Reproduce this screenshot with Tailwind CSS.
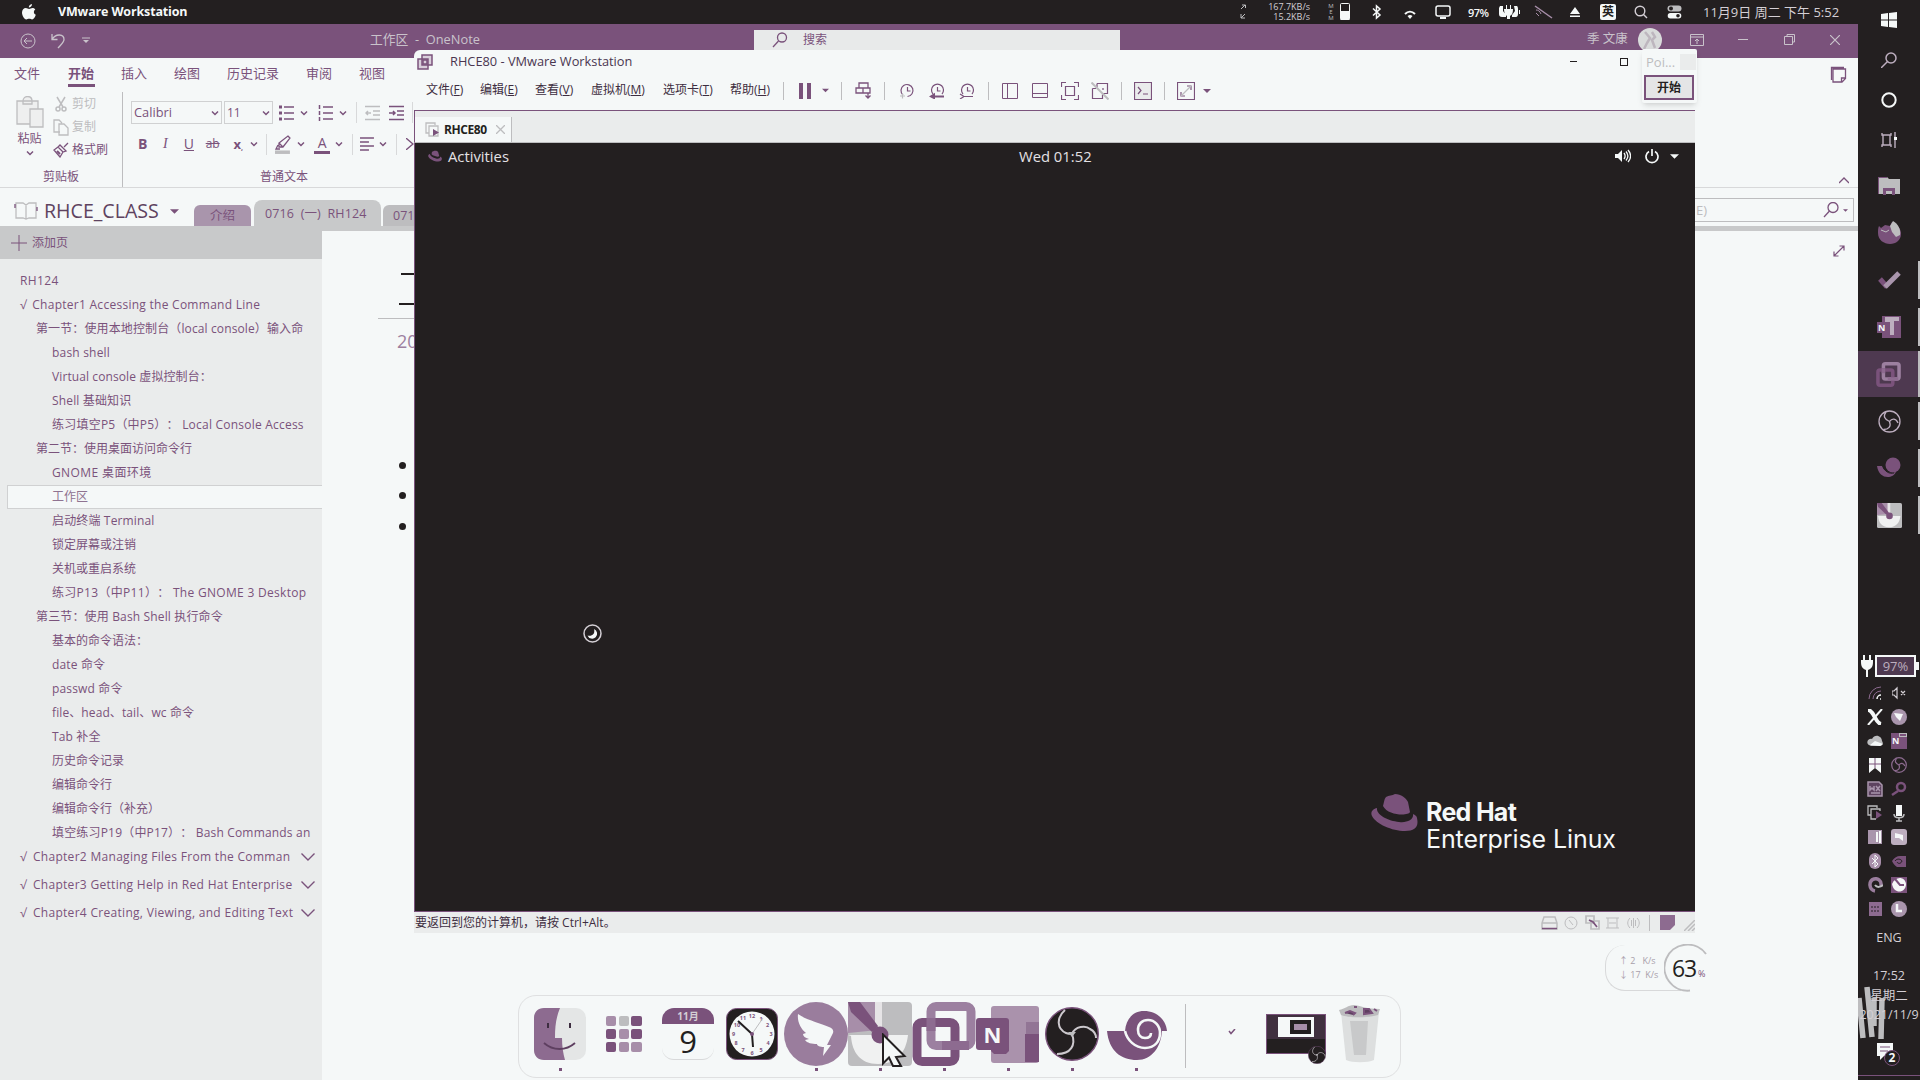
<!DOCTYPE html>
<html lang="zh-CN">
<head>
<meta charset="utf-8">
<title>VMware Workstation</title>
<script src="https://cdn.jsdelivr.net/npm/@tailwindcss/browser@4"></script>
</head>
<body class="flex w-[1920px] h-[1080px] overflow-hidden bg-[#f5f8f8] text-[#7a527b] text-xs leading-none whitespace-nowrap [text-spacing-trim:space-all] font-['Open_Sans','Noto_Sans_CJK_SC',sans-serif]">

<svg class="hidden">
  <symbol id="chev" viewBox="0 0 8 8"><path d="M1 2.500l3 3 3-3" fill="none" stroke="currentColor" stroke-width="1.500"/></symbol>
  <symbol id="caret" viewBox="0 0 8 8"><path d="M0 2h8L4 6z" fill="currentColor"/></symbol>
  <symbol id="obs" viewBox="0 0 54 54"><circle cx="27" cy="27" r="26.300" fill="#231f20" stroke="#7a527b" stroke-width="1.400"/><g fill="none" stroke="#cdc9ce" stroke-width="2"><path d="M20 3c-9 8-8 19 1 23 2 1 4 1 6 1"/><path d="M27 27c3-8 14-9 18-5 4 2 6 5 6 9"/><path d="M27 27c4 11-1 20-15 20"/></g><path d="M23 25h8l-4 5z" fill="#bdbdbf"/></symbol>
  <symbol id="vm" viewBox="0 0 64 64"><rect x="19" y="4.500" width="40" height="39" rx="5" fill="none" stroke="#9c80a0" stroke-width="9"/><rect x="5" y="20.500" width="38" height="39" rx="5" fill="none" stroke="#7a527b" stroke-width="9"/><path d="M19 16v13M30 43.500h27" stroke="#8d6b90" stroke-width="9" fill="none"/></symbol>
  <symbol id="snail" viewBox="0 0 60 50"><path d="M0 20h18c1-12 8-20 19-20 12 0 22 8 23 20h-5c-1 16-10 29-25 29C14 49 2 40 0 20z" fill="#7a527b"/><path d="M18 20c2 9 10 17 20 17 10 0 15-7 15-15 0-7-5-13-12-13-6 0-10 4-10 10 0 5 3 8 7 8 4 0 6-2 6-5" fill="none" stroke="#f5f8f8" stroke-width="2.600"/><path d="M22 20C22 9 29 2 38 2" fill="none" stroke="#7a527b" stroke-width="3"/></symbol>
  <symbol id="pic" viewBox="0 0 64 64"><rect width="64" height="64" rx="4" fill="#bdbdbf"/><path d="M0 0h30v28L0 31z" fill="#a78ea9"/><path d="M27 0h7v28l-7-6z" fill="#e6e4e6"/><path d="M0 33h60c-2 18-12 29-30 29S4 50 3 34z" fill="#f0f1f1"/><path d="M0 0h12l18 24-6 6L3 10z" fill="#7a527b"/><circle cx="32" cy="33" r="8.500" fill="#7a527b"/></symbol>
</svg>

<main class="relative flex w-[1858px] h-full shrink-0 flex-col">

  <!-- system menu bar -->
  <header class="flex h-6 shrink-0 items-center bg-[#231f20] text-[#f5f8f8]">
    <svg class="ml-[22px] h-4 w-[14px]" viewBox="0 0 14 16" fill="currentColor"><path d="M10 0c0 2-1.500 3.500-3.200 3.500C6.700 1.700 8 .4 10 0zM13.300 5.500c-2 1.200-1.900 4.200.5 5.200-.7 2.300-2.200 4.800-3.700 4.800-1.100 0-1.500-.7-2.900-.7s-1.900.7-2.900.7C2.200 15.500 0 11.500 0 8.600 0 5.700 1.800 4 3.800 4c1.300 0 2.300.9 3.300.9S9.200 4 10.600 4c1 0 2 .5 2.700 1.500z"/></svg>
    <b class="ml-[22px] mt-px w-[1180px] text-[12.5px] font-bold tracking-[-0.15px]">VMware Workstation</b>
    <svg class="h-4 w-3 text-[#bdbdbf]" viewBox="0 0 12 16" fill="none" stroke="currentColor"><path d="M3 5l4-4M4 1h3.500v3M7 10l-4 4M3 10v4h4"/></svg>
    <div class="ml-[10px] flex w-[50px] flex-col items-end text-[9px] leading-[10px] text-[#d4cfd5]"><span>167.7KB/s</span><span>15.2KB/s</span></div>
    <div class="ml-[17px] flex w-2 flex-col text-center text-[6px] leading-[6px] text-[#bdbdbf]"><span>M</span><span>E</span><span>M</span></div>
    <svg class="ml-1 h-5 w-3" viewBox="0 0 12 20"><rect x="1.500" y="1.500" width="9" height="16" rx="1" fill="none" stroke="currentColor"/><path d="M1.500 9h9v9h-9z" fill="currentColor"/></svg>
    <svg class="ml-[20px] h-4 w-3" viewBox="0 0 12 16" fill="none" stroke="currentColor" stroke-width="1.500"><path d="M2 4.500l7 6.500-3.500 3V2L9 5l-7 6.500"/></svg>
    <svg class="ml-[19px] h-3 w-4 mt-1" viewBox="0 0 16 12"><path d="M3 6c3-3 7-3 10 0" fill="none" stroke="currentColor" stroke-width="2"/><path d="M5.500 8c2-1.500 3-1.500 5 0L8 11z" fill="currentColor"/></svg>
    <svg class="ml-[17px] h-4 w-4" viewBox="0 0 16 16"><rect x="1" y="2" width="14" height="10" rx="2" fill="none" stroke="currentColor" stroke-width="1.500"/><path d="M5 13h6v2H5z" fill="currentColor"/></svg>
    <span class="ml-[17px] mt-px w-[21px] text-[11px] font-semibold tracking-[-0.6px]">97%</span>
    <svg class="ml-2 h-4 w-6" viewBox="0 0 24 16" fill="currentColor"><path d="M3 2h3v5l3 4v2H5c-2 0-3-1-3-3V4zM9 1h1v4h3V1h1v4h2c0 4-1 6-3 7v3h-3v-3C8 11 7 8 7 5h2zM17 2h3c1 1 1 2 1 4v4c0 2-1 3-2 3h-4v-2l3-4zM22 6h1v4h-1z"/></svg>
    <svg class="ml-[12px] h-4 w-5 text-[#a78ea9]" viewBox="0 0 20 16" fill="none" stroke="currentColor"><path d="M2 2l17 12" stroke-width="1.500"/><path d="M3 6c2 0 4 1 5 4M3 9l3 3"/></svg>
    <svg class="ml-[16px] h-3 w-3" viewBox="0 0 12 12" fill="currentColor"><path d="M6 1l5 7H1zM1 9.500h10V11H1z"/></svg>
    <span class="ml-[19px] flex size-4 items-center justify-center rounded-xs bg-[#f5f8f8] text-xs font-bold text-[#231f20]">英</span>
    <svg class="ml-[18px] size-[14px] text-[#d4cfd5]" viewBox="0 0 14 14" fill="none" stroke="currentColor" stroke-width="1.400"><circle cx="6" cy="6" r="4.800"/><path d="M9.500 9.500L13 13"/></svg>
    <svg class="ml-[19px] h-[14px] w-[15px]" viewBox="0 0 15 14"><rect x=".5" y=".5" width="14" height="6" rx="3" fill="#bdbdbf"/><circle cx="4" cy="3.500" r="2" fill="#231f20"/><rect x=".7" y="8" width="13.600" height="5.500" rx="2.700" fill="#f5f8f8"/><circle cx="11" cy="10.700" r="1.800" fill="#231f20"/></svg>
    <span class="ml-[21px] text-[13px] text-[#d4cfd5]">11月9日 周二 下午 5:52</span>
  </header>

  <!-- OneNote title bar -->
  <div class="flex h-[34px] shrink-0 items-start bg-[#7a527b] text-[#c9c3cb]">
    <svg class="ml-5 mt-[9px] size-4" viewBox="0 0 16 16" fill="none" stroke="currentColor"><circle cx="8" cy="8" r="7"/><path d="M12 8H4m3-3L4 8l3 3"/></svg>
    <svg class="ml-[14px] mt-[9px] h-4 w-4" viewBox="0 0 16 16" fill="none" stroke="currentColor" stroke-width="1.300"><path d="M2 1v5.500h5.500M2 6.500C6 0 14 1 14 6.500c0 3-3 5-6 8.500"/></svg>
    <svg class="ml-4 mt-[13px] size-2" viewBox="0 0 8 8"><path d="M0 1h8" stroke="currentColor"/><path d="M1 3h6L4 6z" fill="currentColor"/></svg>
    <span class="ml-[280px] mt-[7px] w-[384px] text-[12.800px] leading-4">工作区&nbsp; -&nbsp; OneNote</span>
    <div class="mt-[6px] flex h-5 w-[366px] items-center bg-[#e8eaea] text-[#7a527b]">
      <svg class="ml-[18px] size-4" viewBox="0 0 16 16" fill="none" stroke="currentColor" stroke-width="1.300"><circle cx="10" cy="5.500" r="4.500"/><path d="M6.500 9L1 15"/></svg>
      <span class="ml-[15px] text-xs">搜索</span>
    </div>
    <span class="ml-[467px] mt-[7px] w-10 text-[12.5px] leading-4">季 文康</span>
    <svg class="ml-[11px] mt-[4px] size-6" viewBox="0 0 24 24"><circle cx="12" cy="12" r="12" fill="#d9dbdb"/><path d="M7 4l5 6-3 5-3 6M14 4l3 5-3 3 3 8" stroke="#bdb6be" stroke-width="2.500" fill="none"/></svg>
    <svg class="ml-7 mt-[10px] h-3 w-[14px]" viewBox="0 0 14 12" fill="none" stroke="currentColor"><path d="M.5.500h13v11H.5zM.5 3h13M7 10V5M5 7l2-2 2 2"/></svg>
    <svg class="ml-[34px] mt-[10px] h-3 w-[10px]" viewBox="0 0 10 12" stroke="currentColor"><path d="M0 5.500h10"/></svg>
    <svg class="ml-9 mt-[10px] size-[11px]" viewBox="0 0 11 11" fill="none" stroke="currentColor"><path d="M.5 2.500h8v8h-8zM3 2.500v-2h7.500V8h-2"/></svg>
    <svg class="ml-[35px] mt-[11px] size-[10px]" viewBox="0 0 10 10" stroke="currentColor" stroke-width="1.200"><path d="M0 0l10 10M10 0L0 10"/></svg>
  </div>

  <!-- ribbon -->
  <div class="flex h-[130px] shrink-0 flex-col border-b border-[#d8d9da]">
    <nav class="flex h-[34px] items-start pl-[14px] text-[13px] leading-4">
      <span class="w-[54px] pt-[7px]">文件</span>
      <span class="mr-[26px] flex h-[34px] w-[27px] flex-col pt-[7px] font-bold"><span>开始</span><i class="mt-[3px] h-[3px] bg-[#7a527b]"></i></span>
      <span class="w-[53px] pt-[7px]">插入</span><span class="w-[53px] pt-[7px]">绘图</span><span class="w-[79px] pt-[7px]">历史记录</span><span class="w-[53px] pt-[7px]">审阅</span><span class="pt-[7px]">视图</span>
      <svg class="ml-auto mr-[11px] mt-2 size-[18px]" viewBox="0 0 18 18" fill="none" stroke="currentColor" stroke-width="1.300"><path d="M4 3h12.500v9.500L13 16H4zM12.500 16v-4h4M2.500 14V1.500H15"/></svg>
    </nav>
    <div class="flex h-[95px]">
      <div class="flex w-[123px] flex-col border-r border-[#bdbdbf]">
        <div class="flex h-[77px]">
          <div class="flex w-[55px] flex-col items-center pl-1">
            <svg class="mt-[4px] h-8 w-7" viewBox="0 0 28 32" fill="#eeefef" stroke="#bdbdbf" stroke-width="1.300"><path d="M1 5h21v23H1zM7 5c0-6 9-6 9 0v3H7z"/><path d="M14 13h13v18H14z"/></svg>
            <span class="mt-[3px] text-xs">粘贴</span>
            <svg class="mt-[2px] size-2"><use href="#chev"/></svg>
          </div>
          <div class="flex flex-col pt-px text-xs">
            <div class="flex h-[22px] items-center gap-[5px] text-[#bdbdbf]"><svg class="h-4 w-[12px]" viewBox="0 0 12 16" fill="none" stroke="currentColor" stroke-width="1.500"><path d="M2 1l6 10M10 1L4 11"/><circle cx="3" cy="13" r="2"/><circle cx="9" cy="13" r="2"/></svg>剪切</div>
            <div class="flex h-[24px] items-center gap-[3px] text-[#bdbdbf]"><svg class="-ml-[2px] h-[17px] w-[16px]" viewBox="0 0 16 17" fill="none" stroke="currentColor" stroke-width="1.300"><path d="M7 13H1V1h5l3 3M6 5h5l4 4v7H6z"/></svg>复制</div>
            <div class="flex h-[22px] items-center gap-[3px]"><svg class="-ml-[2px] size-4" viewBox="0 0 16 16" fill="none" stroke="currentColor" stroke-width="1.300"><path d="M15 1l-4 4M7 3l6 6-3 1-5-5zM5 5L1 8l6 7 3-5"/><path d="M4 9l3 3" stroke-width="2"/></svg>格式刷</div>
          </div>
        </div>
        <span class="pl-[43px] text-xs">剪贴板</span>
      </div>
      <div class="flex w-[291px] flex-col overflow-hidden">
        <div class="mt-[9px] flex h-[23px] items-center pl-[8px]">
          <div class="flex h-[23px] w-[91px] items-center justify-between border border-[#d0d1d2] px-[2px] text-[12.800px]">Calibri<svg class="size-2"><use href="#chev"/></svg></div>
          <div class="ml-[2px] flex h-[23px] w-[49px] items-center justify-between border border-[#d0d1d2] px-[2px] text-[12px]">11<svg class="size-2"><use href="#chev"/></svg></div>
          <svg class="ml-[6px] size-4" viewBox="0 0 16 16" stroke="currentColor" stroke-width="1.500"><path d="M0 2h3M0 8h3M0 14h3" stroke-width="3"/><path d="M5 2h10M5 8h10M5 14h10"/></svg>
          <svg class="ml-[5px] size-2"><use href="#chev"/></svg>
          <svg class="ml-[10px] size-4" viewBox="0 0 16 16" stroke="currentColor"><path d="M1.500 0v4M1.500 6v4M1.500 12v4" stroke-width="1.500"/><path d="M5 2h10M5 8h10M5 14h10" stroke-width="1.500"/></svg>
          <svg class="ml-[5px] size-2"><use href="#chev"/></svg>
          <i class="ml-[9px] h-[21px] w-px bg-[#d8d9da]"></i>
          <svg class="ml-[8px] size-4 text-[#bdbdbf]" viewBox="0 0 16 16" fill="none" stroke="currentColor" stroke-width="1.500"><path d="M0 1.500h15M8 6h7M8 10h7M0 14.500h15M6 8H1m2-2L1 8l2 2"/></svg>
          <svg class="ml-[8px] size-4" viewBox="0 0 16 16" fill="none" stroke="currentColor" stroke-width="1.500"><path d="M0 1.500h15M8 6h7M8 10h7M0 14.500h15M0 8h6M4 6l2 2-2 2"/></svg>
          <i class="ml-[7px] h-[21px] w-px bg-[#d8d9da]"></i>
        </div>
        <div class="mt-[9px] flex h-[22px] items-center pl-[15px] text-sm">
          <b class="w-6">B</b><i class="w-[22px] pl-[1px] font-['Liberation_Serif']">I</i><u class="w-[22px]">U</u><s class="w-[28px] text-xs">ab</s><span class="w-[17px] font-bold text-[13px]">x<sub class="text-[7px]">,</sub></span>
          <svg class="size-2"><use href="#chev"/></svg>
          <i class="ml-[8px] h-[21px] w-px bg-[#d8d9da]"></i>
          <svg class="ml-[7px] h-[19px] w-[17px]" viewBox="0 0 17 19"><path d="M14 1l2 2-7 9H5v-4zM5 8l4 4M4 10l-2 4h4" fill="none" stroke="currentColor" stroke-width="1.300"/><path d="M1 15.500h15V19H1z" fill="#bdbdbf"/></svg>
          <svg class="ml-[6px] size-2"><use href="#chev"/></svg>
          <span class="ml-[9px] flex h-[19px] w-4 flex-col items-center border-b-[3px] border-[#7a527b] leading-4">A</span>
          <svg class="ml-[5px] size-2"><use href="#chev"/></svg>
          <i class="ml-[9px] h-[21px] w-px bg-[#d8d9da]"></i>
          <svg class="ml-[7px] size-[14px]" viewBox="0 0 14 14" stroke="currentColor" stroke-width="1.400"><path d="M0 1h14M0 5h9M0 9h14M0 13h9"/></svg>
          <svg class="ml-[5px] size-2"><use href="#chev"/></svg>
          <i class="ml-[9px] h-[21px] w-px bg-[#d8d9da]"></i>
          <svg class="ml-[9px] h-3 w-2" viewBox="0 0 8 12" stroke="currentColor" stroke-width="1.300" fill="none"><path d="M0 0l7 6-7 6"/></svg>
        </div>
        <span class="mt-[14px] pl-[137px] text-xs">普通文本</span>
      </div>
      <svg class="ml-auto mr-[9px] mt-[83px] h-[10px] w-[10px]" viewBox="0 0 10 10" fill="none" stroke="currentColor" stroke-width="1.300"><path d="M0 8l5-5 5 5"/></svg>
    </div>
  </div>

  <!-- notebook header -->
  <div class="flex h-[38px] shrink-0">
    <svg class="ml-[14px] mt-[13px] h-[19px] w-6" viewBox="0 0 24 19" fill="none" stroke="#bdbdbf" stroke-width="1.300"><path d="M2 2h7l3 2 3-2h7v15h-7l-3 1-3-1H2zM12 4v14"/><path d="M1 3v4M23 6v4" stroke="#7a527b"/></svg>
    <span class="ml-[6px] mt-[11px] w-[126px] text-[19.600px] leading-6 text-[#5e4360]">RHCE_CLASS</span>
    <svg class="mt-[19px] size-[9px]"><use href="#caret"/></svg>
    <div class="ml-[15px] flex items-end text-[12.500px]">
      <span class="h-[21px] w-[57px] rounded-t-md bg-[#a995ac] pt-[5px] text-center">介绍</span>
      <span class="ml-[3px] h-[26px] w-[127px] rounded-t-lg bg-[#c8c9ca] pl-[11px] pt-[8px] tracking-[0.1px]">0716&nbsp; (一)&nbsp; RH124</span>
      <span class="ml-[2px] h-[21px] w-[80px] rounded-t-md bg-[#bdbdbf] pl-[10px] pt-[5px]">071</span>
    </div>
    <div class="ml-auto mr-1 mt-[10px] flex h-[24px] w-[400px] items-center justify-end border border-[#bdbdbf]">
      <span class="mr-auto pl-[241px] text-[13px] text-[#bdbdbf]">E)</span>
      <svg class="size-4" viewBox="0 0 16 16" fill="none" stroke="currentColor" stroke-width="1.300"><circle cx="10" cy="5.500" r="5"/><path d="M6.500 9L1 15"/></svg>
      <svg class="ml-[4px] mr-[5px] size-[5px]"><use href="#caret"/></svg>
    </div>
  </div>

  <!-- page list and canvas -->
  <div class="flex min-h-0 flex-1">
    <div class="flex w-[322px] shrink-0 flex-col bg-[#eaecec]">
      <div class="flex h-[33px] items-center gap-[5px] bg-[#c8c9ca] pl-[11px]">
        <svg class="size-4" viewBox="0 0 16 16" stroke="currentColor"><path d="M8 0v16M0 8h16"/></svg>添加页
      </div>
      <ul class="mt-[10px] flex flex-col leading-[24px] [&>li]:h-6 [&>li]:shrink-0 [&>li]:overflow-hidden text-[12px]">
        <li class="pl-5 tracking-[0.35px]">RH124</li>
        <li class="pl-5 tracking-[0.27px]">√<span class="ml-[2px]"> Chapter1 Accessing the Command Line</span></li>
        <li class="pl-9 tracking-[0.12px]">第一节：使用本地控制台（local console）输入命</li>
        <li class="pl-[52px] tracking-[0.2px]">bash shell</li>
        <li class="pl-[52px] tracking-[0.1px]">Virtual console 虚拟控制台：</li>
        <li class="pl-[52px] tracking-[0.15px]">Shell 基础知识</li>
        <li class="pl-[52px] tracking-[0.22px]">练习填空P5（中P5）： Local Console Access</li>
        <li class="pl-9">第二节：使用桌面访问命令行</li>
        <li class="pl-[52px] tracking-[0.4px]">GNOME 桌面环境</li>
        <li class="ml-[7px] border border-r-0 border-[#d0d1d2] bg-[#f5f8f8] pl-[44px] leading-[22px] text-[#8f7391]">工作区</li>
        <li class="pl-[52px] tracking-[0.15px]">启动终端 Terminal</li>
        <li class="pl-[52px]">锁定屏幕或注销</li>
        <li class="pl-[52px]">关机或重启系统</li>
        <li class="pl-[52px] tracking-[0.3px]">练习P13（中P11）： The GNOME 3 Desktop</li>
        <li class="pl-9 tracking-[0.15px]">第三节：使用 Bash Shell 执行命令</li>
        <li class="pl-[52px]">基本的命令语法：</li>
        <li class="pl-[52px] tracking-[0.15px]">date 命令</li>
        <li class="pl-[52px] tracking-[0.15px]">passwd 命令</li>
        <li class="pl-[52px] tracking-[0.1px]">file、head、tail、wc 命令</li>
        <li class="pl-[52px] tracking-[0.15px]">Tab 补全</li>
        <li class="pl-[52px]">历史命令记录</li>
        <li class="pl-[52px]">编辑命令行</li>
        <li class="pl-[52px]">编辑命令行（补充）</li>
        <li class="pl-[52px] tracking-[0.18px]">填空练习P19（中P17）： Bash Commands an</li>
      </ul>
      <div class="-mt-[2px] flex flex-col leading-[28px] tracking-[0.3px]">
        <div class="flex h-7 items-center pl-5 pr-[7px]">√<span class="ml-[6px]">Chapter2 Managing Files From the Comman</span><svg class="ml-auto h-2 w-[14px]" viewBox="0 0 14 8" fill="none" stroke="currentColor" stroke-width="1.400"><path d="M.5.500L7 7 13.500.500"/></svg></div>
        <div class="flex h-7 items-center pl-5 pr-[7px]">√<span class="ml-[6px]">Chapter3 Getting Help in Red Hat Enterprise</span><svg class="ml-auto h-2 w-[14px]" viewBox="0 0 14 8" fill="none" stroke="currentColor" stroke-width="1.400"><path d="M.5.500L7 7 13.500.500"/></svg></div>
        <div class="flex h-7 items-center pl-5 pr-[7px]">√<span class="ml-[6px]">Chapter4 Creating, Viewing, and Editing Text</span><svg class="ml-auto h-2 w-[14px]" viewBox="0 0 14 8" fill="none" stroke="currentColor" stroke-width="1.400"><path d="M.5.500L7 7 13.500.500"/></svg></div>
      </div>
    </div>
    <div class="flex flex-1 flex-col border-t-[5px] border-[#c8c9ca]">
      <div class="flex justify-between">
        <div class="flex w-[92px] flex-col pl-14 text-[#231f20]">
          <i class="ml-[23px] mt-[42px] h-[2px] w-[13px] bg-[#231f20]"></i>
          <i class="ml-[21px] mt-[28px] h-[2px] w-[15px] bg-[#231f20]"></i>
          <i class="mt-[13px] h-px w-9 bg-[#bdbdbf]"></i>
          <span class="mt-[12px] pl-[19px] text-[18px] leading-5 text-[#9c80a0]">20</span>
          <i class="ml-[21px] mt-[111px] size-[7px] rounded-full bg-[#231f20]"></i>
          <i class="ml-[21px] mt-[23px] size-[7px] rounded-full bg-[#231f20]"></i>
          <i class="ml-[21px] mt-[24px] size-[7px] rounded-full bg-[#231f20]"></i>
        </div>
        <svg class="mr-[13px] mt-[14px] size-3" viewBox="0 0 12 12" fill="none" stroke="currentColor" stroke-width="1.200"><path d="M1 11L11 1M6.500 1H11v4.500M1 6.500V11h4.500"/></svg>
      </div>
    </div>
  </div>

  <!-- VMware window -->
  <section class="absolute left-[414px] top-[50px] flex h-[883px] w-[1281px] flex-col overflow-hidden rounded-tl-md bg-[#f5f8f8] text-[#231f20]">
    <div class="flex h-[23px] items-center">
      <svg class="ml-[3px] size-4 text-[#7a527b]" viewBox="0 0 16 16" fill="#d9cfdb" stroke="currentColor" stroke-width="1.500"><path d="M5 1h10v10H5zM1 5h10v10H1z"/><path d="M6 6h4v4H6z"/></svg>
      <span class="ml-[17px] text-[12.800px] text-[#4a3650]">RHCE80 - VMware Workstation</span>
      <i class="ml-auto h-[1.500px] w-[7px] bg-[#231f20]"></i>
      <i class="ml-[43px] mr-[67px] size-2 border-[1.500px] border-[#231f20]"></i>
    </div>
    <div class="flex h-[38px] items-center border-b border-[#7a527b] pl-3 pb-[2px] text-[#7a527b]">
      <div class="flex pb-[2px] text-xs text-[#3d2d40]"><span class="w-[54px]">文件(<u>F</u>)</span><span class="w-[55px]">编辑(<u>E</u>)</span><span class="w-[56px]">查看(<u>V</u>)</span><span class="w-[72px]">虚拟机(<u>M</u>)</span><span class="w-[67px]">选项卡(<u>T</u>)</span><span class="w-[53px]">帮助(<u>H</u>)</span></div>
      <i class="h-[18px] w-px bg-[#bdbdbf]"></i>
      <svg class="ml-[15px] h-4 w-3" viewBox="0 0 12 16" fill="currentColor"><path d="M0 0h4v16H0zM8 0h4v16H8z"/></svg>
      <svg class="ml-[11px] size-[7px]"><use href="#caret"/></svg>
      <i class="ml-[12px] h-[18px] w-px bg-[#bdbdbf]"></i>
      <svg class="ml-[13px] h-[17px] w-4" viewBox="0 0 16 17" fill="none" stroke="currentColor" stroke-width="1.300"><path d="M4 1h9v5H4zM1 6h7v5H1zM8 6h7v5H8z"/><path d="M13 11v5m-2.500-2.500L13 16l2.500-2.500"/></svg>
      <i class="ml-[13px] h-[18px] w-px bg-[#bdbdbf]"></i>
      <svg class="ml-[14px] size-4" viewBox="0 0 16 16" fill="none" stroke="currentColor" stroke-width="1.200"><path d="M4 12a6 6 0 1 1 4.500 1.500"/><path d="M8.500 4v4h3"/><path d="M1 13h5M3.500 10.500v5" stroke="#bdbdbf"/></svg>
      <svg class="ml-[14px] size-4" viewBox="0 0 16 16" fill="none" stroke="currentColor" stroke-width="1.200"><path d="M4 11a6 6 0 1 1 9 0"/><path d="M8.500 4v4h3"/><path d="M4 13.500h11M5 11.500l-3 2 3 1.500z" stroke-width="2"/></svg>
      <svg class="ml-[14px] size-4" viewBox="0 0 16 16" fill="none" stroke="currentColor" stroke-width="1.200"><path d="M4 11a6 6 0 1 1 9 0"/><path d="M8.500 4v4h3M1 11l4 2.500L1 16M5 13.500h9"/></svg>
      <i class="ml-[13px] h-[18px] w-px bg-[#bdbdbf]"></i>
      <svg class="ml-[13px] size-4" viewBox="0 0 16 16" fill="none" stroke="currentColor"><path d="M.5.500h15v15H.5zM5.500.500v15"/></svg>
      <svg class="ml-[14px] size-4" viewBox="0 0 16 16" fill="none" stroke="currentColor"><path d="M.5.500h15v14H.5zM.5 10.500h15"/></svg>
      <svg class="ml-[13px] size-[18px]" viewBox="0 0 18 18" fill="none" stroke="currentColor" stroke-width="1.200"><path d="M5 .5H.5V5M13 .5h4.500V5M5 17.500H.5V13M13 17.500h4.500V13M4.500 4.500h9v9h-9z"/></svg>
      <svg class="ml-[12px] size-[18px]" viewBox="0 0 18 18" fill="none" stroke="currentColor" stroke-width="1.200"><path d="M6 1.500h10.500v10H12M6 1.500v4M1.500 6.500H5M1.500 6.500v10h10v-4M12 6v2"/><path d="M.5.500l17 17" stroke="#bdbdbf" stroke-width="2"/></svg>
      <i class="ml-[12px] h-[18px] w-px bg-[#bdbdbf]"></i>
      <svg class="ml-[12px] size-[18px]" viewBox="0 0 18 18" fill="none" stroke="currentColor" stroke-width="1.200"><path fill="#eaecec" d="M.5.500h17v17H.5z"/><path d="M4 5l3 3.500L4 12M9 12h5"/></svg>
      <i class="ml-[12px] h-[18px] w-px bg-[#bdbdbf]"></i>
      <svg class="ml-[12px] size-[18px]" viewBox="0 0 18 18" fill="none" stroke="currentColor" stroke-width="1.200"><path d="M.5.500h17v17H.5zM10 4h4v4M4 10v4h4"/><path d="M4 14L14 4" stroke="#bdbdbf"/></svg>
      <svg class="ml-[8px] size-[8px]"><use href="#caret"/></svg>
    </div>
    <div class="flex h-[32px] border-b border-l border-b-[#bdbdbf] border-l-[#7a527b] bg-[#eaecec] pt-[6px]">
      <div class="flex w-[97px] items-center border-r border-[#bdbdbf] bg-[#f5f8f8] pl-[10px]">
        <svg class="size-[15px]" viewBox="0 0 15 15" fill="none" stroke="#bdbdbf" stroke-width="1.300"><path d="M10 3V1H1v10h3M4 4h9v10H4z"/><path d="M8 7v7l6-3.500z" fill="#7a527b" stroke="none"/></svg>
        <b class="ml-[4px] w-[52px] text-xs tracking-[-0.4px]">RHCE80</b>
        <svg class="size-[9px]" viewBox="0 0 9 9" stroke="#bdbdbf" stroke-width="1.300"><path d="M0 0l9 9M9 0L0 9"/></svg>
      </div>
    </div>
    <!-- guest display -->
    <div class="flex h-[769px] flex-col border-b border-l border-[#7a527b] bg-[#231f20] text-[#e4e1e5]">
      <div class="grid h-[27px] grid-cols-[604px_1fr_auto] items-center pb-px text-[14.800px]">
        <div class="flex items-center pl-[13px]"><svg class="h-3 w-[14px] text-[#7a527b]" viewBox="0 0 47 37" fill="currentColor"><path d="M13 6c4-6 17-7 21-1l4 14c-6 4-20 0-26-6zM6 12c-4 1-6 4-5 8 4 9 20 17 33 17 10 0 14-5 12-13l-5-4c1 6-6 9-14 7C16 24 8 19 6 12z"/></svg><span class="ml-[6px]">Activities</span></div>
        <span>Wed 01:52</span>
        <div class="flex items-center pr-4 text-[#f5f8f8]">
          <svg class="h-[14px] w-4" viewBox="0 0 16 14"><path d="M0 5h3l4-4v12L3 9H0z" fill="currentColor"/><path d="M9 4c1.500 2 1.500 4 0 6M11 2.500c2.500 3 2.500 6 0 9M13 1c3.500 4 3.500 8 0 12" fill="none" stroke="currentColor" stroke-width="1.300"/></svg>
          <svg class="ml-[14px] h-[15px] w-[14px]" viewBox="0 0 14 15" fill="none" stroke="currentColor" stroke-width="1.700"><path d="M4 2.500a6 6 0 1 0 6 0M7 0v7"/></svg>
          <svg class="ml-[11px] size-[9px]"><use href="#caret"/></svg>
        </div>
      </div>
      <svg class="ml-[168px] mt-[454px] size-[19px] shrink-0" viewBox="0 0 19 19" fill="none"><circle cx="9.500" cy="9.500" r="8.500" stroke="#d4cfd5" stroke-width="1.500"/><path d="M11 5a5 5 0 1 1-6.500 6.500c4 1 8-1 6.500-6.500z" fill="#f5f8f8"/></svg>
      <div class="ml-auto mr-[79px] mt-[148px] flex w-[245px] gap-[8px] text-[#f5f8f8]">
        <svg class="mt-[3px] h-[37px] w-[47px] text-[#7a527b]" viewBox="0 0 47 37" fill="currentColor"><path d="M12 12c1-3 1-7 3-9 3-2 6-1 9-3 6 0 11 4 13 8l2 10c-1 4-22 4-27-6zM6 14c-4 1-7 4-5 8 4 8 20 15 33 15 10 0 14-4 12-13 0-2-2-3-4-4 1 6-6 9-14 8C17 27 5 21 6 14z"/></svg>
        <div class="flex flex-col font-['Inter']"><b class="pt-[8px] text-[25px] leading-[27px] tracking-[-0.700px]">Red Hat</b><span class="text-[25px] leading-[26px] tracking-[-0.100px]">Enterprise Linux</span></div>
      </div>
    </div>
    <div class="flex flex-1 items-center bg-[#eaecec] text-[#bdbdbf]">
      <span class="mr-auto pt-px text-[12px] text-[#3d2d40] ml-px">要返回到您的计算机，请按 Ctrl+Alt。</span>
      <svg class="h-[14px] w-[17px]" viewBox="0 0 17 14" fill="none" stroke="currentColor" stroke-width="1.500"><path d="M3 1h11l2 6v6H1V7zM1 7h15"/><path d="M1 12.500h15" stroke="#7a527b"/></svg>
      <svg class="ml-[6px] size-[14px]" viewBox="0 0 14 14" fill="none" stroke="currentColor"><circle cx="7" cy="7" r="6"/><path d="M5 4l4 5"/></svg>
      <svg class="ml-[7px] size-[15px]" viewBox="0 0 15 15" fill="none" stroke="currentColor" stroke-width="1.700"><path d="M1 1h8v7H1zM6 6h8v8H6z"/><path d="M4 5l4 2 4 5" stroke="#7a527b"/></svg>
      <svg class="ml-[6px] h-3 w-[13px]" viewBox="0 0 13 12" fill="none" stroke="currentColor"><path d="M0 1h13M2 1v10M11 1v10M0 11h13M3 6h7"/></svg>
      <svg class="ml-[8px] h-3 w-[13px]" viewBox="0 0 13 12" fill="none" stroke="currentColor"><path d="M3 1C0 4 0 8 3 11M10 1c3 3 3 7 0 10M6.500 1v10M4.500 3v6M8.500 3v6"/></svg>
      <i class="ml-[9px] h-4 w-px bg-[#bdbdbf]"></i>
      <svg class="ml-[9px] h-[15px] w-4" viewBox="0 0 16 15"><path d="M1 0h15v10l-5 5H1z" fill="#8d6b90"/></svg>
      <svg class="ml-[9px] size-[11px] self-end mb-[2px]" viewBox="0 0 11 11" stroke="currentColor" stroke-width="1.500"><path d="M0 11L11 0M4 11l7-7M8 11l3-3"/></svg>
    </div>
  </section>

  <!-- floating tool -->
  <section class="absolute left-[1642px] top-[49px] flex h-[54px] w-[55px] flex-col rounded-xs bg-[#f5f8f8] pl-[2px] shadow-md">
    <div class="flex h-[26px] items-center pl-[2px] text-[13px] text-[#bdbdbf]">Poi...<i class="ml-[5px] h-4 w-[16px] bg-[#eaecec]"></i></div>
    <span class="flex h-[25px] w-[50px] items-center justify-center border-2 border-[#7a527b] bg-[#e4e5e6] text-xs font-bold text-[#231f20]">开始</span>
  </section>

  <!-- network speed -->
  <section class="absolute left-[1605px] top-[944px] flex h-[48px] w-[107px] items-center">
    <div class="flex h-[46px] w-[76px] flex-col justify-center gap-[5px] rounded-l-[20px] border-b border-l border-[#d8d9da] pl-[13px] text-[9px] text-[#a9a0ab]"><span>↑ 2 &nbsp; K/s</span><span>↓ 17 &nbsp;K/s</span></div>
    <svg class="absolute left-[59px] top-0 size-12" viewBox="0 0 48 48"><circle cx="24" cy="24" r="23" fill="#f5f8f8"/><path d="M42 10A23 23 0 1 0 26 46.500" fill="none" stroke="#bdbdbf" stroke-width="2"/></svg>
    <span class="absolute left-[67px] top-[12px] text-[23px] leading-6 tracking-[-1.200px] text-[#231f20]">63<small class="ml-[2px] text-[9px] text-[#7a527b]">%</small></span>
  </section>

  <!-- dock -->
  <section class="absolute left-[518px] top-[995px] flex h-[83px] w-[883px] items-start rounded-[18px] border border-[#dfe0e1]">
    <div class="ml-[15px] flex w-[52px] flex-col items-center pt-[12px]">
      <svg class="size-[52px]" viewBox="0 0 52 52"><rect width="52" height="52" rx="10" fill="#e4e6e6"/><path d="M26 0H10C4 0 0 4 0 10v32c0 6 4 10 10 10h21c-2-7-3-14-3-22h-7c0-12 1-20 5-30z" fill="#8d6b90"/><path d="M10 35c9 8 22 8 31 0" fill="none" stroke="#5e3f60" stroke-width="1.800"/><path d="M14 15v5M36 15v5" stroke="#3d2d40" stroke-width="2"/></svg>
      <i class="mt-[8px] size-[3px] bg-[#7a527b]"></i>
    </div>
    <svg class="ml-[20px] mt-[20px] size-[36px]" viewBox="0 0 36 36"><g fill="#7a527b"><rect y="13" width="10" height="10" rx="2"/><rect y="26" width="10" height="10" rx="2"/><rect x="25" width="11" height="10" rx="2"/><rect x="25" y="13" width="11" height="10" rx="2"/></g><g fill="#a78ea9"><rect width="10" height="10" rx="2"/><rect x="13" y="26" width="10" height="10" rx="2"/><rect x="25" y="26" width="11" height="10" rx="2"/><rect x="13" y="13" width="10" height="10" rx="2"/></g><rect x="13" width="10" height="10" rx="2" fill="#bdbdbf"/></svg>
    <div class="ml-[20px] mt-[12px] flex h-[52px] w-[52px] flex-col items-center overflow-hidden rounded-xl border-b border-[#d8d9da] text-[#231f20]">
      <span class="flex h-[16px] w-full shrink-0 items-center justify-center bg-[#7a527b] text-[10px] font-bold text-[#d4cfd5]">11月</span>
      <span class="pt-[2px] text-[31px] leading-[31px]">9</span>
    </div>
    <svg class="ml-[12px] mt-[12px] size-[52px]" viewBox="0 0 52 52"><rect x=".5" y=".5" width="51" height="51" rx="10" fill="#231f20" stroke="#7a527b"/><circle cx="26" cy="26" r="22.500" fill="#f5f8f8"/>
      <g fill="#7a527b" font-size="5.500" font-weight="bold" text-anchor="middle"><text x="26" y="10">12</text><text x="35" y="13">1</text><text x="41.500" y="19">2</text><text x="45" y="28">3</text><text x="42" y="37">4</text><text x="35" y="44">5</text><text x="26" y="46.500">6</text><text x="17" y="44">7</text><text x="10" y="37">8</text><text x="7.500" y="28">9</text><text x="11" y="19">10</text><text x="17" y="12">11</text></g>
      <path d="M26 26L12 13M26 26l1 13" stroke="#231f20" stroke-width="2"/><path d="M26 26L37 10" stroke="#bdbdbf"/><circle cx="26" cy="26" r="2" fill="#7a527b"/></svg>
    <div class="ml-[6px] flex w-16 flex-col items-center pt-[6px]">
      <svg class="size-16" viewBox="0 0 64 64"><circle cx="32" cy="32" r="32" fill="#9a7d9d"/><path d="M14 12c8 6 22 9 31 13 3 1 5 3 4 6l-6 12h4l-8 11 1-9c-4 0-7-1-7-3-5 0-10-1-12-4l4-1c-4-1-6-3-6-5l3-1c-5-4-9-11-8-19z" fill="#f5f8f8"/></svg>
      <i class="mt-[2px] size-[3px] bg-[#7a527b]"></i>
    </div>
    <div class="flex w-16 flex-col items-center pt-[6px]"><svg class="size-16"><use href="#pic"/></svg><i class="mt-[2px] size-[3px] bg-[#7a527b]"></i></div>
    <div class="flex w-16 flex-col items-center pt-[6px]"><svg class="size-16"><use href="#vm"/></svg><i class="mt-[2px] size-[3px] bg-[#7a527b]"></i></div>
    <div class="flex w-16 flex-col items-center pt-[6px]">
      <span class="relative flex h-16 w-16"><svg class="size-16" viewBox="0 0 64 64"><rect x="15" y="4" width="48" height="57" rx="3" fill="#aa92ac"/><rect x="50" y="20" width="13" height="13" fill="#927595"/><path d="M49 32h14v28H49z" fill="#7a527b"/><path d="M15 42h18v7l-3 3H18l-3-3z" fill="#7a527b"/><rect x="0" y="16" width="33" height="32" rx="3" fill="#7a527b"/></svg><b class="absolute left-0 top-[16px] w-[33px] text-center text-[22px] leading-8 text-[#f5f8f8]">N</b></span>
      <i class="mt-[2px] size-[3px] bg-[#7a527b]"></i>
    </div>
    <div class="flex w-16 flex-col items-center pt-[11px]"><svg class="size-[54px]"><use href="#obs"/></svg><i class="mt-[7px] size-[3px] bg-[#7a527b]"></i></div>
    <div class="flex w-16 flex-col items-center pt-[15px]"><svg class="ml-[2px] h-[50px] w-[60px]"><use href="#snail"/></svg><i class="mt-[7px] size-[3px] bg-[#7a527b]"></i></div>
    <i class="ml-[17px] mt-[8px] h-16 w-px bg-[#bdbdbf]"></i>
    <svg class="ml-[42px] mt-[33px] h-[6px] w-[8px]" viewBox="0 0 8 6" stroke="currentColor" stroke-width="1.500" fill="none"><path d="M1 2l2 2.500L7 0"/></svg>
    <div class="relative ml-[30px] mt-[18px] flex h-[40px] w-[60px] justify-center border border-[#7a527b] bg-[#40303f]">
      <span class="mt-[2px] flex h-[20px] w-[36px] items-start justify-end bg-[#f5f8f8] p-[3px]"><i class="h-[14px] w-[21px] border-4 border-[#231f20] bg-[#a78ea9]"></i></span>
      <i class="absolute bottom-0 left-0 h-[14px] w-full bg-[#231f20]"></i>
      <svg class="absolute -bottom-[11px] -right-[1px] size-[18px]"><use href="#obs"/></svg>
    </div>
    <svg class="ml-[12px] mt-[9px] h-[58px] w-[44px]" viewBox="0 0 44 58"><path d="M3 7l5 48c6 3 22 3 28 0l5-48z" fill="#dddfdf"/><path d="M12 16h18l-2 34H16z" fill="#c8c9ca"/><path d="M1 5c6-1 9-5 15-5 8 1 12 4 26 4l-2 6c-10 3-30 3-37 0z" fill="#bdbdbf"/><path d="M7 8l5-2 5 2-2 2M26 4h5l3 4-8 1zM16 2h3M36 4l3 2" stroke="#7a527b" stroke-width="2" fill="#5e3f60"/></svg>
  </section>

  <svg class="absolute left-[881px] top-[1033px] h-[34px] w-[26px]" viewBox="0 0 26 34"><path d="M2 1.500v29l6-6 4 8.500h8l-5-9 8.500-1z" fill="#f5f8f8" stroke="#231f20" stroke-width="2"/></svg>
</main>

<!-- right task bar -->
<aside class="relative flex w-[62px] shrink-0 flex-col items-center bg-[#231f20] text-[#f5f8f8]">
  <svg class="mt-3 size-4" viewBox="0 0 16 16" fill="currentColor"><path d="M0 2l7-1v6.500H0zM8 1l8-1v7.500H8zM0 8.500h7V15l-7-1zM8 8.500h8V16l-8-1z"/></svg>
  <svg class="mt-6 size-4 text-[#bdaebf]" viewBox="0 0 16 16" fill="none" stroke="currentColor" stroke-width="1.500"><circle cx="10" cy="6" r="5"/><path d="M6.500 9.500L0 16"/></svg>
  <svg class="mt-6 size-4" viewBox="0 0 16 16"><circle cx="8" cy="8" r="6.700" fill="none" stroke="currentColor" stroke-width="2"/></svg>
  <svg class="mt-[24px] size-4 text-[#bdaebf]" viewBox="0 0 16 16" fill="none" stroke="currentColor" stroke-width="1.400"><path d="M1 1v2h9V1M1 15v-2h9v2M2 3v10M9 3v10M14 0v16"/><path d="M13 5h3v3h-3z" fill="#f5f8f8" stroke="none"/></svg>
  <svg class="mt-[29px] h-[18px] w-[22px]" viewBox="0 0 22 18"><path d="M0 0h9l2 2h11v15H0z" fill="#bdbdbf"/><path d="M0 0h9v1H1v16H0zM5 18v-7h12v7h-3v-4H8v4z" fill="#7a527b"/></svg>
  <svg class="mt-[26px] size-[23px]" viewBox="0 0 23 23"><path d="M1 5l2 2 4-3 5 1 2-4c6 3 9 7 9 12 0 6-5 10-11 10S0 19 0 12c0-3 0-5 1-7z" fill="#7a527b"/><path d="M12 5l3-5c5 3 8 8 7 14l-4 2-4-5z" fill="#bdbdbf"/><path d="M3 9l5 2 3-2" stroke="#bdbdbf" fill="none"/></svg>
  <span class="mt-[17px] flex h-[38px] w-full items-center justify-center border-r-2 border-[#bdbdbf]"><svg class="ml-[2px] h-5 w-[23px]" viewBox="0 0 23 20" fill="none" stroke-width="5"><path d="M2 9l7 8" stroke="#7a527b"/><path d="M7 17L21 3" stroke="#a995ac"/></svg></span>
  <span class="mt-[9px] flex h-[38px] w-full items-center justify-center border-r-2 border-[#bdbdbf]"><span class="relative ml-[2px] flex h-[22px] w-6"><svg class="h-[22px] w-6" viewBox="0 0 24 22"><path d="M5 0h19v22H5z" fill="#7a527b"/><path d="M8 1h14v4h-5v14h-4V6H8z" fill="#bdaebf"/><path d="M0 6h10v11H0z" fill="#7a527b"/></svg><b class="absolute left-[1px] top-[6px] text-[9px] leading-[11px]">N</b></span></span>
  <span class="mt-[5px] flex h-[46px] w-full items-center justify-center border-r-2 border-[#bdbdbf] bg-[#4e3950]"><svg class="size-[25px]"><use href="#vm"/></svg></span>
  <span class="mt-[5px] flex h-[38px] w-full items-center justify-center border-r-2 border-[#bdbdbf]"><svg class="ml-[2px] size-[23px]" viewBox="0 0 23 23" fill="none" stroke="#bdaebf" stroke-width="1.300"><circle cx="11.500" cy="11.500" r="10.500"/><path d="M8 2c-3 4-2 7 3.500 9.500M11.500 11.500C14 8 18 8 20 13M11.500 11.500c2 5-1 8-6 8"/></svg></span>
  <span class="mt-[9px] flex h-[38px] w-full items-center justify-center border-r-2 border-[#bdbdbf]"><svg class="ml-[2px] size-6" viewBox="0 0 24 22" fill="#7a527b"><circle cx="16" cy="8" r="7.500"/><path d="M0 9h5c2 6 8 8 14 6-3 7-17 8-19-6z"/><path d="M6 9c2 6 6 8 11 7" stroke="#231f20" fill="none"/></svg></span>
  <span class="mt-[9px] flex h-[38px] w-full items-center justify-center border-r-2 border-[#bdbdbf]"><svg class="ml-[2px] size-[25px]"><use href="#pic"/></svg></span>

  <div class="mt-[121px] flex h-[22px] w-full items-center pl-[3px]">
    <svg class="h-[22px] w-3" viewBox="0 0 12 22" fill="currentColor"><path d="M2 0h2v5h4V0h2v5h2v2c0 5-2 7-5 8v7H5v-7C2 14 0 12 0 7V5h2z"/></svg>
    <span class="ml-[2px] flex h-[22px] w-[41px] items-center justify-center border-2 border-[#f5f8f8] bg-[#4e3950] text-[13px] text-[#bdaebf]">97%</span><i class="h-2 w-[3px] bg-[#f5f8f8]"></i>
  </div>

  <div class="mt-[4px] grid grid-cols-[24px_24px] auto-rows-[24px] place-items-center self-start pl-[5px] text-[#bdbdbf]">
    <svg class="size-[14px]" viewBox="0 0 14 14" fill="none" stroke="#8d6b90"><path d="M1 13A12 12 0 0 1 13 1M5 13a8 8 0 0 1 8-8"/><path d="M9 13a4 4 0 0 1 4-4M12 13h1" stroke="#f5f8f8" stroke-width="1.500"/></svg>
    <svg class="size-[14px]" viewBox="0 0 14 14" fill="none" stroke="#d4cfd5" stroke-width="1.200"><path d="M0 5h2l3-3v10L2 9H0zM9 5l4 4M13 5L9 9"/></svg>
    <svg class="size-4" viewBox="0 0 16 16" fill="none" stroke="#f5f8f8"><path d="M1 1c6 0 7 13 13 14" stroke-width="4"/><path d="M15 0L1 16" stroke-width="2"/></svg>
    <svg class="size-4" viewBox="0 0 16 16"><circle cx="8" cy="8" r="8" fill="#a995ac"/><path d="M3 4l9 1-3 7-4-4z" fill="#f5f8f8"/></svg>
    <svg class="h-3 w-4" viewBox="0 0 16 12"><path d="M2 10c-4-3 0-7 3-6 3-6 10-3 10 2 2 3 0 5-2 5H4z" fill="#bdbdbf"/><path d="M3 10l5-4 8 3-3 2z" fill="#f5f8f8"/></svg>
    <span class="relative flex size-4 bg-[#7a527b]"><b class="pl-px text-[9px] leading-4 text-[#f5f8f8]">N</b><i class="absolute right-0 top-0 h-1 w-2 border border-[#bdbdbf]"></i></span>
    <svg class="h-[15px] w-3" viewBox="0 0 12 15"><path d="M0 0h12v15l-6-5-6 5z" fill="#f5f8f8"/><path d="M6 0v10M0 6h12" stroke="#7a527b"/></svg>
    <svg class="size-4" viewBox="0 0 23 23" fill="none" stroke="#8d6b90" stroke-width="1.800"><circle cx="11.500" cy="11.500" r="10.500"/><path d="M8 2c-3 4-2 7 3.500 9.500M11.500 11.500C14 8 18 8 20 13M11.500 11.500c2 5-1 8-6 8"/></svg>
    <svg class="size-4" viewBox="0 0 16 16" fill="none" stroke="#a995ac" stroke-width="1.500"><path d="M1 1h11l3 3v11H1z" fill="#5e4360"/><path d="M3 5v4l2-2 2 2V5M9 5l4 5M13 5l-4 5M4 12h9"/></svg>
    <svg class="size-4" viewBox="0 0 16 16" fill="none" stroke="#7a527b" stroke-width="2.500"><circle cx="10" cy="6" r="4"/><path d="M7 10l-6 4"/></svg>
    <svg class="size-4" viewBox="0 0 16 16" fill="none" stroke="#bdbdbf" stroke-width="1.300"><path d="M10 3V1H1v9h3M13 6V4H4v10h5"/><path d="M9 6v8l6-4z" fill="#7a527b" stroke="none"/></svg>
    <svg class="h-[17px] w-3 text-[#f5f8f8]" viewBox="0 0 12 17"><path d="M3 0h6v11H3z" fill="currentColor"/><path d="M1 9c0 5 10 5 10 0M6 13v3M3 16h6" stroke="#bdbdbf" fill="none" stroke-width="1.500"/></svg>
    <svg class="size-[14px]" viewBox="0 0 14 14"><path d="M0 0h14v14H0z" fill="#a995ac"/><path d="M9 2v10M12 1v12" stroke="#f5f8f8" stroke-width="2"/></svg>
    <svg class="size-4" viewBox="0 0 16 16"><rect width="16" height="16" rx="3" fill="#bdaebf"/><path d="M4 4l8 2v6l-4-3H4z" fill="#f5f8f8"/></svg>
    <svg class="h-4 w-3" viewBox="0 0 12 16"><rect width="12" height="16" rx="6" fill="#a78ea9"/><path d="M3 5l6 6-3 3V2l3 3-6 6" fill="none" stroke="#f5f8f8"/></svg>
    <svg class="h-[11px] w-[14px]" viewBox="0 0 14 11"><path d="M0 5c4-6 8-5 14-5v11H5C2 9 1 7 0 5z" fill="#7a527b"/><path d="M3 5c2-3 6-2 7 0-1 3-4 3-5 1" stroke="#231f20" fill="none"/></svg>
    <svg class="size-4" viewBox="0 0 16 16" fill="none"><path d="M14 9C15 3 10 1 7 2 1 4 2 13 8 14" stroke="#9a7d9d" stroke-width="3.500"/><path d="M8 8c2 3 6 2 8 0" stroke="#bdbdbf" stroke-width="2"/></svg>
    <svg class="size-4" viewBox="0 0 16 16"><rect width="16" height="16" fill="#7a527b"/><path d="M1 7c3-8 13-8 14 0 0 9-12 11-14 0z" fill="#f5f8f8"/><path d="M4 2l5 6h4" stroke="#7a527b" stroke-width="2" fill="none"/></svg>
    <svg class="h-[14px] w-[13px]" viewBox="0 0 13 14"><path d="M0 0h13v14H0z" fill="#8d6b90"/><path d="M2 5h9M2 9h9" stroke="#231f20" stroke-dasharray="2 1"/></svg>
    <svg class="size-4" viewBox="0 0 16 16"><circle cx="8" cy="8" r="8" fill="#a995ac"/><path d="M6 3v7h5" stroke="#f5f8f8" stroke-width="2.500" fill="none"/></svg>
  </div>

  <svg class="absolute left-0 top-[986px] h-[54px] w-7" viewBox="0 0 28 54" fill="none" stroke="#bdbdbf" stroke-width="5.500"><path d="M9 1l5 50M16 12v28M24 12l-1 41M1 12l4 40"/></svg>
  <div class="relative mt-[9px] flex flex-col items-center text-[#d4cfd5]">
    <span class="text-[12.500px] leading-4">ENG</span>
    <span class="mt-[22px] text-[12.500px] leading-4">17:52</span>
    <span class="mt-[4px] text-[12.500px] leading-4">星期二</span>
    <span class="mt-[3px] text-[12.500px] leading-4">2021/11/9</span>
  </div>
  <div class="relative mt-[20px] flex h-[26px] w-[24px]">
    <svg class="h-[18px] w-4" viewBox="0 0 16 18"><path d="M0 0h16v13H7l-4 4v-4H0z" fill="#f5f8f8"/><path d="M3 4h10M3 8h8" stroke="#7a527b"/></svg>
    <b class="absolute left-[7px] top-[7px] flex size-4 items-center justify-center rounded-full border border-[#7a527b] bg-[#231f20] text-[12px]">2</b>
  </div>
  <i class="absolute bottom-1 left-0 h-px w-full bg-[#7a527b]"></i>
</aside>
</body>
</html>
